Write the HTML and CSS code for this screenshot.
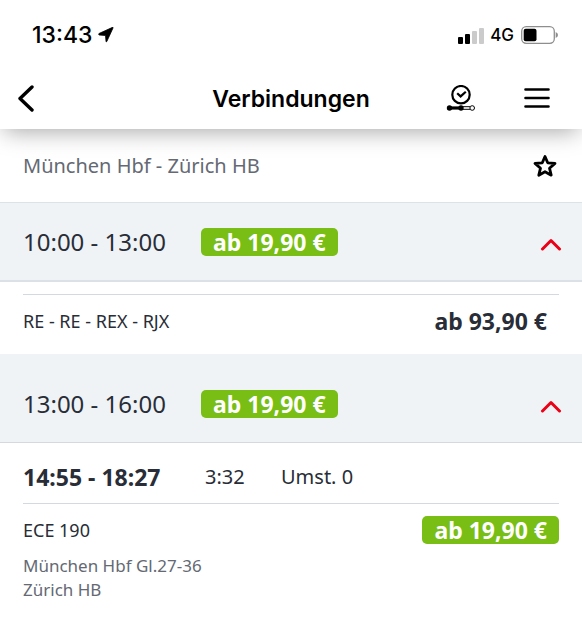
FILE: index.html
```html
<!DOCTYPE html>
<html lang="de">
<head>
<meta charset="utf-8">
<meta name="viewport" content="width=device-width, initial-scale=1">
<title>Verbindungen</title>
<link rel="stylesheet" href="styles.css">
</head>
<body>
<header class="top">
  <div class="status">
    <span class="clock">13:43</span>
    <svg class="location" width="16" height="16" viewBox="0 0 16 16" aria-hidden="true"><path d="M15 1 8.800 14.500Q8.200 15.600 8 14.200L7.500 8.500 1.300 8Q0 7.500 1 6.500L14 .6Q15.600 0 15 1Z" stroke="#000" stroke-width=".8" stroke-linejoin="round"/></svg>
    <svg class="signal" width="26" height="17" viewBox="0 0 26 17" aria-hidden="true"><rect y="10" width="5" height="7" rx="1"/><rect x="7" y="7" width="5" height="10" rx="1"/><g fill="#cbcbcb"><rect x="14" y="4" width="5" height="13" rx="1"/><rect x="21" y="1" width="5" height="16" rx="1"/></g></svg>
    <span class="network">4G</span>
    <svg class="battery" width="37" height="18" viewBox="0 0 37 18" aria-hidden="true"><rect x=".7" y=".7" width="32.6" height="16.6" rx="4.5" fill="none" stroke="#8e8e8e" stroke-width="1.3"/><rect x="2.7" y="2.8" width="12.8" height="12.4" rx="2"/><path d="M34.7 6Q37 7 37 9t-2.300 3Z" fill="#8e8e8e"/></svg>
  </div>
  <nav class="bar">
    <button class="icon-button back" type="button" aria-label="Zurück"><svg width="18" height="28" viewBox="0 0 18 28"><path d="M14 2 2 13.500 14 25" fill="none" stroke="#000" stroke-width="3.400" stroke-linecap="round" stroke-linejoin="round"/></svg></button>
    <h1 class="title">Verbindungen</h1>
    <div class="actions">
      <button class="icon-button" type="button" aria-label="Zeit und Verlauf"><svg width="30" height="28" viewBox="0 0 30 28"><g fill="none" stroke="#000"><circle cx="15" cy="9.700" r="8.700" stroke-width="2.200"/><path d="m11.200 8.200 3.400 3.200 5.200-4.700" stroke-width="2.200"/><path d="M3.500 23H15" stroke-width="3.200"/><path d="M15 21.700h9M15 24.300h9" stroke-width="1"/><circle cx="26.200" cy="23" r="2.300" stroke-width="1"/></g><circle cx="3.500" cy="23" r="2.700"/><circle cx="15" cy="23" r="2.700"/></svg></button>
      <button class="icon-button" type="button" aria-label="Menü"><svg width="26" height="22" viewBox="0 0 26 22"><path d="M1.500 1.500h23M1.500 10h23M1.500 18.500h23" stroke="#000" stroke-width="2.600" stroke-linecap="round"/></svg></button>
    </div>
  </nav>
</header>
<main>
  <div class="route">
    <h2 class="route-name">München Hbf - Zürich HB</h2>
    <button class="icon-button" type="button" aria-label="Merken"><svg width="24" height="24" viewBox="0 0 24 24"><path d="m12 2.500 2.700 6.300 7.300.6-5.500 4.800 1.700 7-6.200-3.500-6.200 3.500 1.700-7L2 9.400l7.300-.6Z" fill="none" stroke="#000" stroke-width="2.800" stroke-linejoin="round"/></svg></button>
  </div>
  <section>
    <button class="slot" type="button" aria-expanded="true">
      <span class="slot-time">10:00 - 13:00</span>
      <span class="price offer">ab 19,90 €</span>
      <svg class="chevron" width="22" height="14" viewBox="0 0 22 14" aria-hidden="true"><path d="m2.500 12 8.500-8.500 8.500 8.500"/></svg>
    </button>
    <article class="connection compact">
      <div class="details">
        <p class="trains">RE - RE - REX - RJX</p>
        <span class="price">ab 93,90 €</span>
      </div>
    </article>
  </section>
  <section>
    <button class="slot later" type="button" aria-expanded="true">
      <span class="slot-time">13:00 - 16:00</span>
      <span class="price offer">ab 19,90 €</span>
      <svg class="chevron" width="22" height="14" viewBox="0 0 22 14" aria-hidden="true"><path d="m2.500 12 8.500-8.500 8.500 8.500"/></svg>
    </button>
    <article class="connection">
      <div class="summary">
        <strong class="times">14:55 - 18:27</strong>
        <span>3:32</span>
        <span>Umst. 0</span>
      </div>
      <div class="details">
        <p class="trains">ECE 190</p>
        <span class="price offer">ab 19,90 €</span>
      </div>
      <p class="stops">München Hbf Gl.27-36<br>Zürich HB</p>
    </article>
  </section>
</main>
</body>
</html>
```
FILE: styles.css
```css
* {
  box-sizing: border-box;
}

body {
  margin: 0;
  background: #fff;
  color: #282d37;
  font-family: "Noto Sans", sans-serif;
}

h1,
h2,
p {
  margin: 0;
}

button {
  border: 0;
  background: none;
  color: inherit;
  font: inherit;
  text-align: left;
}

svg {
  display: block;
  flex: none;
}

.icon-button {
  display: flex;
  padding: 0;
}

.top {
  position: relative;
  background: #fff;
  color: #000;
  font-family: Inter, sans-serif;
  box-shadow: 0 6px 22px -4px rgba(0, 0, 0, 0.36);
}

.status {
  display: flex;
  align-items: center;
  height: 68px;
  padding: 2px 24px 0 32px;
}

.clock {
  font-size: 23px;
  font-weight: 500;
}

.location {
  margin-left: 6px;
}

.signal {
  margin-left: auto;
}

.network {
  margin: 0 7px 0 6px;
  font-size: 17px;
  font-weight: 500;
}

.bar {
  display: grid;
  grid-template-columns: 1fr auto 1fr;
  align-items: center;
  height: 61px;
  padding: 0 18px;
}

.title {
  font-size: 23px;
  font-weight: 600;
  line-height: 32px;
}

.actions {
  display: flex;
  align-items: center;
  justify-content: flex-end;
  gap: 48px;
  margin-right: 14px;
}

.route {
  display: flex;
  align-items: center;
  justify-content: space-between;
  height: 73px;
  padding: 0 25px 0 23px;
}

.route-name {
  color: #646973;
  font-size: 20px;
  font-weight: 400;
}

.slot {
  display: grid;
  grid-template-columns: 178px auto 1fr;
  align-items: center;
  width: 100%;
  padding: 25px 20px 24px 23px;
  border-top: 1px solid #dde2e6;
  border-bottom: 2px solid #dce1e8;
  background: #eff3f6;
}

.later {
  padding-top: 36px;
  border-top: 0;
  border-bottom-width: 1px;
  border-bottom-color: #d3d9de;
}

.slot-time {
  font-size: 24px;
  line-height: 28px;
}

.price {
  padding: 0 12px;
  font-size: 23px;
  font-weight: 700;
  line-height: 28px;
}

.offer {
  border-radius: 5px;
  background: #78be14;
  color: #fff;
}

.chevron {
  justify-self: end;
  margin-top: 4px;
  fill: none;
  stroke: #ec0016;
  stroke-width: 3;
  stroke-linecap: round;
  stroke-linejoin: round;
}

.connection {
  padding: 0 23px;
}

.compact {
  padding-top: 12px;
  padding-bottom: 19px;
}

.details {
  display: flex;
  align-items: center;
  justify-content: space-between;
  padding-top: 12px;
  border-top: 1px solid #d3d9e0;
}

.trains {
  font-size: 18px;
  line-height: 28px;
}

.summary {
  display: grid;
  grid-template-columns: 182px 76px 1fr;
  align-items: center;
  height: 60px;
  padding-top: 7px;
  font-size: 20px;
}

.times {
  font-size: 23px;
}

.stops {
  padding: 10px 0 16px;
  color: #646973;
  font-size: 17px;
  line-height: 24px;
}
```
